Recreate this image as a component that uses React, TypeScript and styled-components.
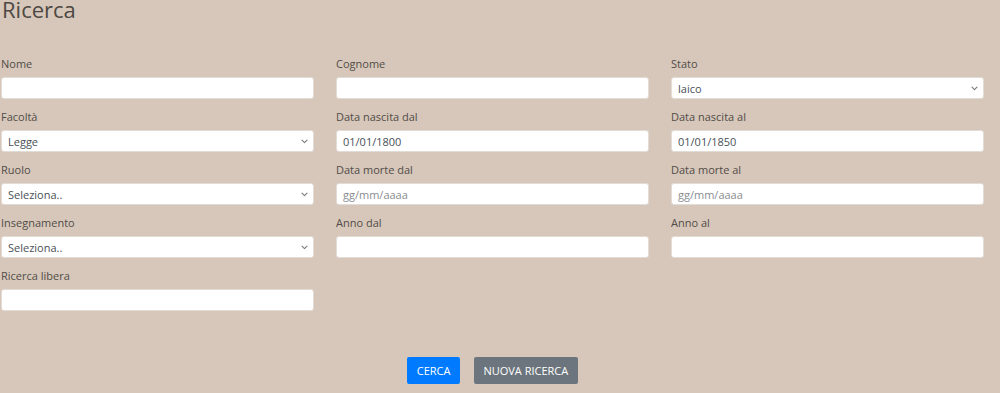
import React from 'react';
import styled, { createGlobalStyle } from 'styled-components';

const GlobalStyle = createGlobalStyle`
	html, body {
		margin: 0;
		padding: 0;
		background: #d6c7ba;
		font-family: "Open Sans", "Liberation Sans", sans-serif;
	}
	* {
		box-sizing: border-box;
	}
`

type FieldType = {
	label: string
	kind: 'text' | 'select'
	value?: string
	placeholder?: string
}

const fields: FieldType[] = [
	{ label: 'Nome', kind: 'text' },
	{ label: 'Cognome', kind: 'text' },
	{ label: 'Stato', kind: 'select', value: 'laico' },
	{ label: 'Facoltà', kind: 'select', value: 'Legge' },
	{ label: 'Data nascita dal', kind: 'text', value: '01/01/1800' },
	{ label: 'Data nascita al', kind: 'text', value: '01/01/1850' },
	{ label: 'Ruolo', kind: 'select', value: 'Seleziona..' },
	{ label: 'Data morte dal', kind: 'text', placeholder: 'gg/mm/aaaa' },
	{ label: 'Data morte al', kind: 'text', placeholder: 'gg/mm/aaaa' },
	{ label: 'Insegnamento', kind: 'select', value: 'Seleziona..' },
	{ label: 'Anno dal', kind: 'text' },
	{ label: 'Anno al', kind: 'text' },
	{ label: 'Ricerca libera', kind: 'text' },
]

const Chevron = () => (
	<ChevronIcon width="7" height="5" viewBox="0 0 7 5">
		<path d="M1 1.2l2.5 2.5 2.5-2.5" fill="none" stroke="#7a7a7a" strokeWidth="1.1" strokeLinecap="round" strokeLinejoin="round" />
	</ChevronIcon>
)

export default function App() {
	return (
		<Page>
			<GlobalStyle />
			<Title>Ricerca</Title>
			<FormGrid>
				{fields.map((f) => (
					<Field key={f.label}>
						<Label>{f.label}</Label>
						{f.kind === 'select' ? (
							<SelectWrap>
								<Select defaultValue={f.value}>
									<option>{f.value}</option>
								</Select>
								<Chevron />
							</SelectWrap>
						) : (
							<Input type="text" defaultValue={f.value} placeholder={f.placeholder} />
						)}
					</Field>
				))}
			</FormGrid>
			<Actions>
				<Button variant="primary">CERCA</Button>
				<Button variant="secondary">NUOVA RICERCA</Button>
			</Actions>
		</Page>
	)
}

const Page = styled.div`
	width: 983px;
	margin-left: 1px;
	height: 393px;
	overflow: hidden;
`

const Title = styled.h1`
	margin: -2px 0 0 1px;
	font-size: 22px;
	font-weight: 400;
	line-height: 22px;
	color: #4d4843;
`

const FormGrid = styled.div`
	display: grid;
	grid-template-columns: repeat(3, 313px);
	column-gap: 22px;
	row-gap: 10px;
	margin-top: 36px;
`

const Field = styled.div`
	display: flex;
	flex-direction: column;
`

const Label = styled.label`
	display: block;
	font-size: 11px;
	line-height: 16px;
	color: #524c47;
	margin-bottom: 5px;
`

const Input = styled.input`
	display: block;
	height: 22px;
	width: 100%;
	padding: 0 6px;
	border: 1px solid #e2dcd6;
	border-radius: 3px;
	background: #fff;
	font-family: inherit;
	font-size: 11px;
	color: #495057;
	outline: none;

	&::placeholder {
		color: #8a8d91;
	}
`

const SelectWrap = styled.div`
	position: relative;
	width: 100%;
	height: 22px;
`

const Select = styled.select`
	display: block;
	appearance: none;
	height: 22px;
	width: 100%;
	padding: 0 20px 0 6px;
	border: 1px solid #e2dcd6;
	border-radius: 3px;
	background: #fff;
	font-family: inherit;
	font-size: 11px;
	color: #495057;
	outline: none;
`

const ChevronIcon = styled.svg`
	position: absolute;
	right: 6px;
	top: 9px;
	pointer-events: none;
`

const Actions = styled.div`
	display: flex;
	justify-content: center;
	gap: 14px;
	margin-top: 46px;
`

const Button = styled.button<{ variant: 'primary' | 'secondary' }>`
	height: 27px;
	padding: 0 9.5px;
	border: none;
	border-radius: 2px;
	font-family: inherit;
	font-size: 11px;
	color: #fff;
	background: ${props => (props.variant === 'primary' ? '#007bff' : '#6c757d')};
	cursor: pointer;
`
